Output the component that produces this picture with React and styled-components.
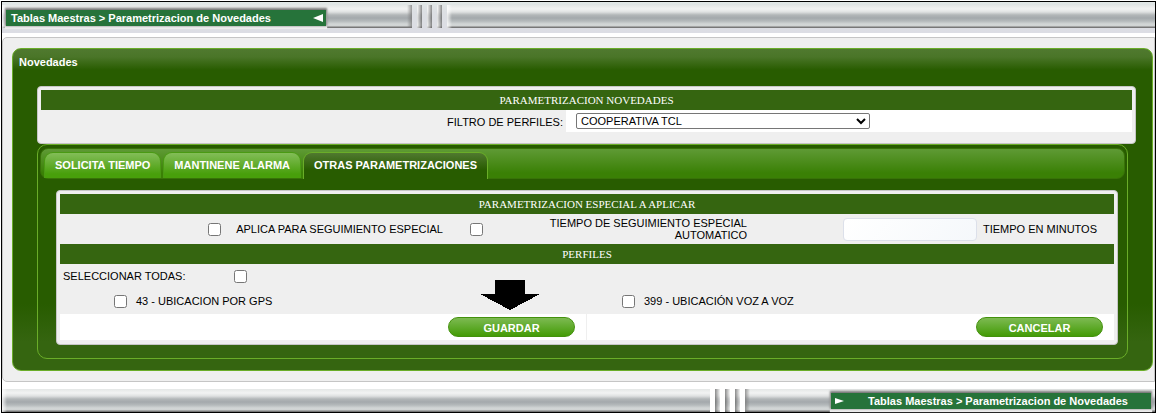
import React from "react";
import styled, { createGlobalStyle, css } from "styled-components";

const Global = createGlobalStyle`
  *, *::before, *::after { box-sizing: border-box; }
  body {
    margin: 0;
    background: #fff;
    color: #000;
    font: 11px/12px "Liberation Sans", Arial, sans-serif;
  }
  button, input, select { font: inherit; margin: 0; }
`;

const Frame = styled.div`
  margin: 1px 0 0 1px;
  border: 1px solid #000;
`;

const metal = css`
  background: linear-gradient(
    #e4e7e6 0, #f2f3f3 4px, #dfe1e1 7px, #b2b6b8 10px, #a4a9ac 13px,
    #b4b9bb 16px, #d2d6d6 19px, #d0d3d3 21px, #777 22px, #777 100%
  );
`;

const Rail = styled.div`
  display: flex;
  gap: 5px;
  height: ${(p) => (p.$foot ? "23px" : "31px")};
  padding: ${(p) => (p.$foot ? "0" : "3px 0 5px")};
  background: ${(p) => (p.$foot ? "#fff" : "linear-gradient(#e2e8e7, #dcdfe3 10px, #dcdde4)")};
`;

const Bar = styled.div`
  ${metal}
  position: relative;
  display: flex;
  flex: ${(p) => (p.$fixed ? "none" : "1")};
  justify-content: ${(p) => (p.$end ? "flex-end" : "flex-start")};
  height: 23px;
  padding-left: ${(p) => (p.$end ? "0" : "4px")};
  padding-right: ${(p) => (p.$fixed && !p.$end ? "86px" : p.$end ? "4px" : "0")};
  width: ${(p) => p.$width || "auto"};

  &::before, &::after {
    content: "";
    position: absolute;
    top: 0;
    bottom: 0;
    width: 5px;
  }
  &::before {
    left: 0;
    background: linear-gradient(90deg, ${(p) => (p.$end ? "#777b" : "#fffc")}, transparent);
  }
  &::after {
    right: 0;
    background: linear-gradient(90deg, transparent, ${(p) => (p.$fixed && !p.$end ? "#777b" : "transparent")});
  }
`;

const Slat = styled.span`
  ${metal}
  width: 5px;
  height: 23px;
  position: relative;
  &::after {
    content: "";
    position: absolute;
    inset: 0;
    background: linear-gradient(90deg, ${(p) => (p.$foot ? "#666b, #fff8" : "#fffb, #666b")});
  }
`;

const Crumb = styled.nav`
  position: relative;
  z-index: 1;
  display: flex;
  align-items: center;
  justify-content: space-between;
  width: 320px;
  height: 16px;
  margin-top: ${(p) => (p.$foot ? "4px" : "5px")};
  padding: ${(p) => (p.$foot ? "0 23px 0 4px" : "0 3px 0 5px")};
  background: #26733a;
  color: #fff;
  font-weight: bold;
  white-space: nowrap;
  box-shadow: 0 -1px 2px 1px #777, 0 2px 1px 1px #eee;
`;

const Shell = styled.main`
  margin: 4px 0 7px;
  padding: 10px 1px 10px 9px;
  border: 1px solid #c5c5c5;
  border-radius: 5px 0 0 5px;
  background: #efefef;
`;

const Panel = styled.section`
  padding: 0 16px 11px 24px;
  border: 1px solid #6aad28;
  border-radius: 9px;
  background:
    linear-gradient(#50792f 0, #4a7528 8px, #285c00 21px, transparent 21px),
    linear-gradient(to top, #356510 0, #356510 28px, #285c00 66px);
`;

const Title = styled.h1`
  margin: 0 0 0 -18px;
  padding: 7px 0 18px;
  color: #fff;
  font-size: 11px;
  line-height: 12px;
`;

const Box = styled.section`
  padding: 3px 3px ${(p) => p.$bottom};
  border: 1px solid #c6c6c6;
  border-radius: 4px;
  background: #efefef;
`;

const Heading = styled.h2`
  margin: 0;
  background: #356510;
  color: #fff;
  font: 11px/20px "Liberation Serif", "Times New Roman", serif;
  text-align: center;
`;

const FilterRow = styled.div`
  display: grid;
  grid-template-columns: 525fr 566fr;
  height: 22px;
`;

const FilterLabel = styled.label`
  padding: 6px 3px 0;
  text-align: right;
`;

const FilterField = styled.div`
  padding: 3px 10px;
  background: #fff;
`;

const Select = styled.select`
  display: block;
  width: 294px;
  height: 16px;
  border: 1px solid #767676;
  border-radius: 2px;
  background-color: #fff;
  color: #000;
`;

const Tabs = styled.div`
  margin-right: 8px;
  padding: 3px 9px 13px 18px;
  border: 1px solid #6aad28;
  border-radius: 10px;
`;

const TabList = styled.div`
  display: flex;
  align-items: flex-end;
  gap: 2px;
  height: 31px;
  margin: 0 -7px 11px -16px;
  padding: 0 3px;
  border: 1px solid #387208;
  border-radius: 8px;
  background: linear-gradient(#5f9a35, #3a8005 24px);
`;

const Tab = styled.button`
  height: 26px;
  padding: 0 10px 2px;
  border: 1px solid #4a9a13;
  border-bottom: 0;
  border-radius: 9px 9px 0 0;
  background: linear-gradient(#83bd58, #489f0b 21px);
  color: #fff;
  font-weight: bold;
  white-space: nowrap;

  &[aria-selected="true"] {
    height: 27px;
    margin-bottom: -1px;
    border-color: #6aad28;
    background: linear-gradient(#50792f, #285c00 17px);
  }
`;

const OptionsRow = styled.div`
  display: grid;
  grid-template-columns: 165fr 221fr 41fr 264fr 363fr;
  align-items: center;
  height: 30px;
`;

const Cell = styled.div`
  display: flex;
  align-items: center;
  justify-content: ${(p) => (p.$end ? "flex-end" : "flex-start")};
  gap: 6px;
  padding: 0 ${(p) => p.$right || "4px"} 0 0;
  text-align: ${(p) => (p.$end ? "right" : "left")};
`;

const Check = styled.input.attrs({ type: "checkbox" })`
  flex: none;
  width: 13px;
  height: 13px;
`;

const Wrapped = styled.label`
  width: 210px;
`;

const Minutes = styled.input`
  width: 134px;
  height: 23px;
  border: 1px solid #dce0ea;
  border-radius: 4px;
  background: linear-gradient(135deg, #fff, #f5f8fb);
`;

const AllRow = styled.div`
  display: flex;
  align-items: center;
  gap: 49px;
  height: 24px;
  padding-left: 3px;
`;

const Profiles = styled.div`
  display: grid;
  grid-template-columns: 508fr 546fr;
  height: 26px;
`;

const Profile = styled.div`
  display: flex;
  align-items: center;
  gap: 9px;
  padding-left: 54px;
`;

const Actions = styled.div`
  display: grid;
  grid-template-columns: 526fr 527fr;
  gap: 1px;
`;

const Action = styled.div`
  position: relative;
  display: flex;
  justify-content: flex-end;
  padding: 3px 11px;
  background: #fff;
`;

const Button = styled.button`
  width: 127px;
  height: 20px;
  padding: 2px 0 0;
  border: 1px solid #43910c;
  border-radius: 10px;
  background: linear-gradient(#7dba52, #439b06);
  color: #fff;
  font-weight: bold;
`;

const Pointer = styled.svg`
  position: absolute;
  right: 46px;
  bottom: 30px;
`;

const Arrow = ({ right }) => (
  <svg width="10" height="8" aria-hidden="true">
    <path d={right ? "M0 1 L9 4 L0 7Z" : "M10 0 L0 4 L10 8Z"} fill="#fff" />
  </svg>
);

const path = "Tablas Maestras > Parametrizacion de Novedades";

export default function App() {
  return (
    <>
      <Global />
      <Frame>
        <Rail>
          <Bar $fixed>
            <Crumb aria-label="Ruta">
              <span>{path}</span>
              <Arrow />
            </Crumb>
          </Bar>
          <Slat /><Slat /><Slat />
          <Bar />
        </Rail>

        <Shell>
          <Panel>
            <Title>Novedades</Title>
            <Box $bottom="11px">
              <Heading>PARAMETRIZACION NOVEDADES</Heading>
              <FilterRow>
                <FilterLabel htmlFor="perfil">FILTRO DE PERFILES:</FilterLabel>
                <FilterField>
                  <Select id="perfil">
                    <option>COOPERATIVA TCL</option>
                  </Select>
                </FilterField>
              </FilterRow>
            </Box>

            <Tabs>
              <TabList role="tablist">
                <Tab role="tab" aria-selected="false">SOLICITA TIEMPO</Tab>
                <Tab role="tab" aria-selected="false">MANTINENE ALARMA</Tab>
                <Tab role="tab" aria-selected="true">OTRAS PARAMETRIZACIONES</Tab>
              </TabList>

              <Box $bottom="4px">
                <Heading>PARAMETRIZACION ESPECIAL A APLICAR</Heading>
                <OptionsRow>
                  <Cell $end><Check id="especial" /></Cell>
                  <Cell $end $right="3px"><label htmlFor="especial">APLICA PARA SEGUIMIENTO ESPECIAL</label></Cell>
                  <Cell $end><Check id="automatico" /></Cell>
                  <Cell $end>
                    <Wrapped htmlFor="automatico">TIEMPO DE SEGUIMIENTO ESPECIAL AUTOMATICO</Wrapped>
                  </Cell>
                  <Cell $end $right="17px">
                    <Minutes id="minutos" type="text" />
                    <label htmlFor="minutos">TIEMPO EN MINUTOS</label>
                  </Cell>
                </OptionsRow>
                <Heading>PERFILES</Heading>
                <AllRow>
                  <label htmlFor="todas">SELECCIONAR TODAS:</label>
                  <Check id="todas" />
                </AllRow>
                <Profiles>
                  <Profile>
                    <Check id="p43" />
                    <label htmlFor="p43">43 - UBICACION POR GPS</label>
                  </Profile>
                  <Profile>
                    <Check id="p399" />
                    <label htmlFor="p399">399 - UBICACIÓN VOZ A VOZ</label>
                  </Profile>
                </Profiles>
                <Actions>
                  <Action>
                    <Pointer width="60" height="30" shapeRendering="crispEdges" aria-hidden="true">
                      <path d="M15 0H45V14H60L30 30L0 14H15Z" />
                    </Pointer>
                    <Button type="button">GUARDAR</Button>
                  </Action>
                  <Action>
                    <Button type="button">CANCELAR</Button>
                  </Action>
                </Actions>
              </Box>
            </Tabs>
          </Panel>
        </Shell>

        <Rail $foot>
          <Bar />
          <Slat $foot /><Slat $foot /><Slat $foot />
          <Bar $fixed $end $width="410px">
            <Crumb $foot aria-label="Ruta inferior">
              <Arrow right />
              <span>{path}</span>
            </Crumb>
          </Bar>
        </Rail>
      </Frame>
    </>
  );
}
